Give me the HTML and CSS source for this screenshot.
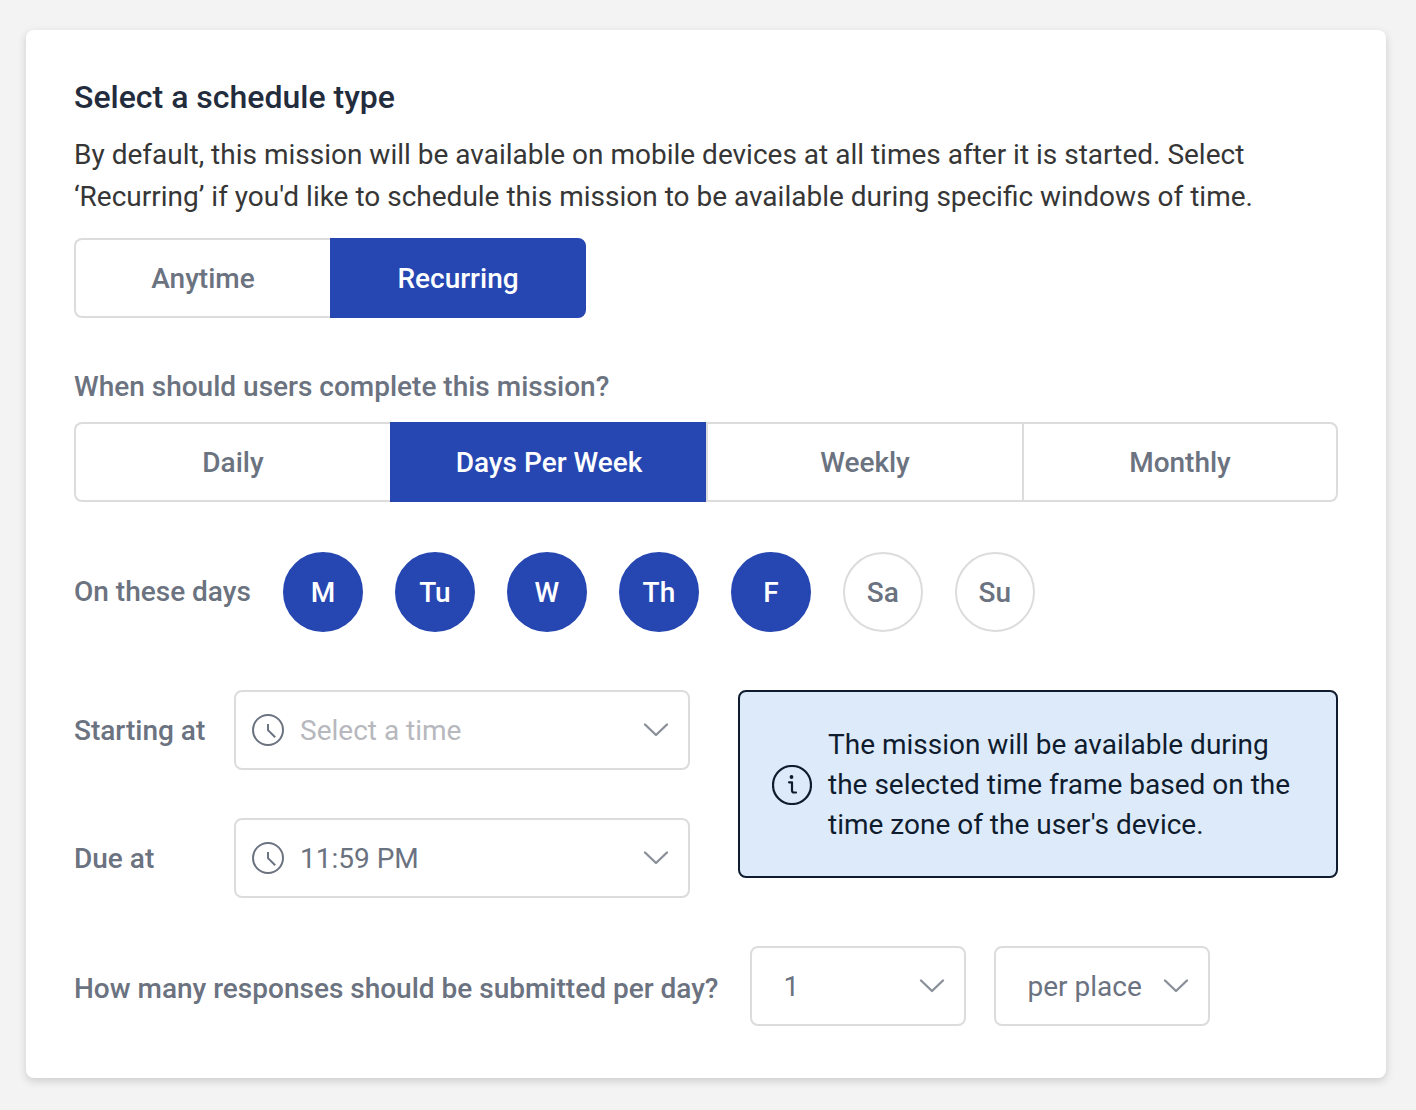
FILE: index.html
```html
<!DOCTYPE html>
<html lang="en">
<head>
<meta charset="utf-8">
<meta name="viewport" content="width=device-width, initial-scale=1">
<title>Mission schedule</title>
<link rel="stylesheet" href="styles.css">
</head>
<body>
<svg class="sprite" aria-hidden="true">
  <symbol id="chevron" viewBox="0 0 28 16"><path d="M3 2.5 14 13 25 2.5" fill="none" stroke="currentColor" stroke-width="2.4" stroke-linecap="round" stroke-linejoin="round"/></symbol>
  <symbol id="clock" viewBox="0 0 32 32"><g fill="none" stroke="currentColor" stroke-width="2"><circle cx="16" cy="16" r="15"/><path d="M16 10v6.200l7.200 7"/></g></symbol>
</svg>
<main class="card">
  <h1 class="title">Select a schedule type</h1>
  <p class="description">By default, this mission will be available on mobile devices at all times after it is started. Select ‘Recurring’ if you'd like to schedule this mission to be available during specific windows of time.</p>

  <div class="segments segments-type" role="group" aria-label="Schedule type">
    <button class="segment" type="button" aria-pressed="false">Anytime</button>
    <button class="segment" type="button" aria-pressed="true">Recurring</button>
  </div>

  <h2 class="label question" id="frequency">When should users complete this mission?</h2>
  <div class="segments" role="group" aria-labelledby="frequency">
    <button class="segment" type="button" aria-pressed="false">Daily</button>
    <button class="segment" type="button" aria-pressed="true">Days Per Week</button>
    <button class="segment" type="button" aria-pressed="false">Weekly</button>
    <button class="segment" type="button" aria-pressed="false">Monthly</button>
  </div>

  <div class="days" role="group" aria-labelledby="days-label">
    <span class="label" id="days-label">On these days</span>
    <button class="day" type="button" aria-pressed="true">M</button>
    <button class="day" type="button" aria-pressed="true">Tu</button>
    <button class="day" type="button" aria-pressed="true">W</button>
    <button class="day" type="button" aria-pressed="true">Th</button>
    <button class="day" type="button" aria-pressed="true">F</button>
    <button class="day" type="button" aria-pressed="false">Sa</button>
    <button class="day" type="button" aria-pressed="false">Su</button>
  </div>

  <div class="window">
    <div class="times">
      <label class="label" for="start">Starting at</label>
      <div class="field field-time">
        <select class="select placeholder" id="start"><option>Select a time</option></select>
        <svg class="clock" aria-hidden="true"><use href="#clock"/></svg>
        <svg class="chevron" aria-hidden="true"><use href="#chevron"/></svg>
      </div>
      <label class="label" for="due">Due at</label>
      <div class="field field-time">
        <select class="select" id="due"><option>11:59 PM</option></select>
        <svg class="clock" aria-hidden="true"><use href="#clock"/></svg>
        <svg class="chevron" aria-hidden="true"><use href="#chevron"/></svg>
      </div>
    </div>
    <aside class="notice">
      <svg class="info" viewBox="0 0 40 40" aria-hidden="true"><circle cx="20" cy="20" r="19" fill="none" stroke="currentColor" stroke-width="2.200"/><circle cx="19.500" cy="12" r="1.900" fill="currentColor"/><path d="M17 17.300h3v8.200q0 2 2 2h2" fill="none" stroke="currentColor" stroke-width="2.200" stroke-linecap="round" stroke-linejoin="round"/></svg>
      <p class="notice-text">The mission will be available during the selected time frame based on the time zone of the user's device.</p>
    </aside>
  </div>

  <div class="responses">
    <label class="label" for="count">How many responses should be submitted per day?</label>
    <div class="limits">
      <div class="field field-small">
        <select class="select" id="count"><option>1</option></select>
        <svg class="chevron" aria-hidden="true"><use href="#chevron"/></svg>
      </div>
      <div class="field field-small">
        <select class="select" aria-label="Response scope"><option>per place</option></select>
        <svg class="chevron" aria-hidden="true"><use href="#chevron"/></svg>
      </div>
    </div>
  </div>
</main>
</body>
</html>
```
FILE: styles.css
```css
:root {
  --blue: #2647b2;
  --gray: #6b7280;
  --line: #dcdcdc;
  --navy: #0f1c2e;
}

* { box-sizing: border-box; }

body {
  margin: 0;
  padding: 30px 30px 32px 26px;
  background: #f3f3f3;
  color: #363636;
  font: 400 28px/40px Roboto, sans-serif;
}

button, select { font: inherit; }

.sprite { display: none; }

.card {
  padding: 48px 48px 52px;
  border-radius: 8px;
  background: #fff;
  box-shadow: 0 3px 8px rgba(0, 0, 0, .16);
}

.title {
  margin: 0 0 18px;
  color: #232c3d;
  font-size: 32px;
  font-weight: 500;
  line-height: 38px;
}

.description {
  margin: 0 0 20px;
  line-height: 42px;
}

.label {
  margin: 0;
  color: var(--gray);
  font-size: 28px;
  font-weight: 500;
}

.question { margin: 49px 0 15px; }

.segments {
  display: grid;
  grid-auto-columns: 1fr;
  grid-auto-flow: column;
}

.segments-type { max-width: 512px; }

.segment {
  height: 80px;
  padding: 2px 0 0;
  border: 2px solid var(--line);
  border-right-width: 0;
  background: #fff;
  color: var(--gray);
  font-weight: 500;
}

.segment:first-child { border-radius: 8px 0 0 8px; }

.segment:last-child {
  border-right-width: 2px;
  border-radius: 0 8px 8px 0;
}

.segment[aria-pressed="true"],
.day[aria-pressed="true"] {
  border-color: var(--blue);
  background: var(--blue);
  color: #fff;
}

.days {
  display: flex;
  flex-wrap: wrap;
  align-items: center;
  gap: 32px;
  margin-top: 50px;
}

.day {
  width: 80px;
  height: 80px;
  padding: 2px 0 0;
  border: 2px solid var(--line);
  border-radius: 50%;
  background: #fff;
  color: var(--gray);
  font-weight: 500;
}

.window {
  display: grid;
  grid-template-columns: 1fr 600px;
  align-items: start;
  gap: 48px;
  margin-top: 58px;
}

.times {
  display: grid;
  grid-template-columns: 160px 1fr;
  align-items: center;
  row-gap: 48px;
}

.times .label { padding-top: 2px; }

.field {
  display: grid;
  align-items: center;
}

.field > * { grid-area: 1 / 1; }

.select {
  width: 100%;
  height: 80px;
  padding: 2px 64px 0 31px;
  border: 2px solid var(--line);
  border-radius: 8px;
  appearance: none;
  background: #fff;
  color: var(--gray);
}

.field-time .select { padding-left: 64px; }

.field-small { width: 216px; }

.select.placeholder { color: #b7b8be; }

.clock,
.chevron { pointer-events: none; }

.clock {
  width: 32px;
  height: 32px;
  margin-left: 18px;
  color: var(--gray);
}

.chevron {
  justify-self: end;
  width: 28px;
  height: 16px;
  margin-right: 20px;
  color: #8b909a;
}

.notice {
  display: flex;
  align-items: center;
  gap: 16px;
  padding: 33px 32px 31px;
  border: 2px solid var(--navy);
  border-radius: 8px;
  background: #ddeafa;
  color: var(--navy);
}

.info {
  flex: none;
  width: 40px;
  height: 40px;
}

.notice-text { margin: 0; }

.responses {
  display: flex;
  flex-wrap: wrap;
  align-items: center;
  gap: 32px;
  margin-top: 48px;
}

.responses .label { padding-top: 5px; }

.limits {
  display: flex;
  gap: 28px;
}

@media (max-width: 1240px) {
  .window { grid-template-columns: 1fr; }
}
```
